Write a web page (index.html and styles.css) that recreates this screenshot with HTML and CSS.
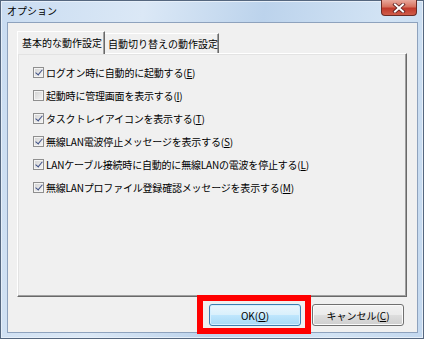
FILE: index.html
```html
<!DOCTYPE html>
<html lang="ja">
<head>
<meta charset="utf-8">
<link rel="stylesheet" href="styles.css">
</head>
<body>
<div class="window">
  <div class="titlebar">
    <span class="title">オプション</span>
    <div class="close">
      <svg width="14" height="10" viewBox="0 0 14 10"><path d="M3 1.5 L11 8.5 M11 1.5 L3 8.5" stroke="#5a1e1e" stroke-width="3.6" stroke-linecap="square"/><path d="M3 1.5 L11 8.5 M11 1.5 L3 8.5" stroke="#ffffff" stroke-width="2" stroke-linecap="square"/></svg>
    </div>
  </div>
  <div class="client">
    <div class="tabs">
      <div class="tab active">基本的な動作設定</div>
      <div class="tab">自動切り替えの動作設定</div>
    </div>
    <div class="panel">
      <label class="row"><span class="cb checked"></span>ログオン時に自動的に起動する(<u>E</u>)</label>
      <label class="row"><span class="cb"></span>起動時に管理画面を表示する(<u>I</u>)</label>
      <label class="row"><span class="cb checked"></span>タスクトレイアイコンを表示する(<u>T</u>)</label>
      <label class="row"><span class="cb checked"></span>無線LAN電波停止メッセージを表示する(<u>S</u>)</label>
      <label class="row"><span class="cb checked"></span>LANケーブル接続時に自動的に無線LANの電波を停止する(<u>L</u>)</label>
      <label class="row"><span class="cb checked"></span>無線LANプロファイル登録確認メッセージを表示する(<u>M</u>)</label>
    </div>
    <div class="buttons">
      <div class="btn default">OK(<u>O</u>)</div>
      <div class="btn">キャンセル(<u>C</u>)</div>
    </div>
  </div>
  <div class="highlight"></div>
</div>
</body>
</html>
```

FILE: styles.css
```css
* { box-sizing: border-box; }
html, body { margin: 0; padding: 0; background: #ffffff; }
body {
  font-family: "Noto Sans CJK JP", "Noto Sans", sans-serif;
  font-size: 10px;
  color: #000;
}
.window {
  position: relative;
  width: 424px;
  height: 339px;
  padding: 0 6px 6px 7px;
  background: linear-gradient(100deg, #c9dcf1 0%, #dbe8f6 30%, #bcd3ec 55%, #d2e3f4 80%, #c3d8ef 100%);
  box-shadow: inset 0 0 0 1px #55677f, inset 0 0 0 2px #e6eff9;
  display: flex;
  flex-direction: column;
}
.titlebar {
  height: 22px;
  display: flex;
  align-items: center;
  justify-content: space-between;
}
.title {
  font-size: 10px;
  line-height: 12px;
  margin-top: -1px;
  color: #000;
}
.close {
  align-self: flex-start;
  width: 36px;
  height: 16px;
  margin-right: 1px;
  border: 1px solid #6b2b25;
  border-top: none;
  border-radius: 0 0 4px 4px;
  background: linear-gradient(#e9a99d 0%, #d7725f 45%, #c0392b 55%, #d05d4a 100%);
  display: flex;
  align-items: center;
  justify-content: center;
}
.close svg { display: block; }
.client {
  flex: 1;
  background: #f0f0f0;
  border: 1px solid #8ea2bd;
  display: flex;
  flex-direction: column;
  padding: 8px 10px 6px 9px;
}
.tabs {
  display: flex;
  align-items: flex-end;
  height: 22px;
  position: relative;
  z-index: 1;
}
.tab {
  height: 20px;
  padding: 0 3px 0 3px;
  border-left: 1px solid #ffffff;
  border-top: 1px solid #ffffff;
  border-right: 1px solid #696969;
  box-shadow: inset -1px 0 0 #a0a0a0;
  background: #f0f0f0;
  line-height: 19px;
  white-space: nowrap;
}
.tab.active {
  width: 88px;
  height: 23px;
  margin-bottom: -1px;
  padding-left: 4px;
  line-height: 22px;
}
.tab + .tab {
  width: 114px;
  border-left: none;
}
.panel {
  height: 244px;
  border-left: 1px solid #ffffff;
  border-top: 1px solid #ffffff;
  border-right: 1px solid #696969;
  border-bottom: 1px solid #696969;
  box-shadow: inset -1px -1px 0 #a0a0a0, inset 1px 1px 0 #e3e3e3;
  padding: 7px 0 0 15px;
  display: flex;
  flex-direction: column;
}
.row {
  height: 23px;
  display: flex;
  align-items: center;
  white-space: nowrap;
  line-height: 12px;
  letter-spacing: -0.2px;
}
.cb {
  width: 11px;
  height: 11px;
  margin-right: 2px;
  flex: none;
  border: 1px solid #8f8f8f;
  background: linear-gradient(135deg, #d2d2d2, #f5f5f5);
  box-shadow: inset 0 0 0 1px #f4f4f4;
  position: relative;
}
.cb.checked::after {
  content: "";
  position: absolute;
  left: 2.5px;
  top: 0px;
  width: 3px;
  height: 6px;
  border-right: 1.5px solid #3d4f86;
  border-bottom: 1.5px solid #3d4f86;
  transform: rotate(40deg);
}
.buttons {
  display: flex;
  justify-content: flex-end;
  gap: 11px;
  margin-top: 7px;
  padding-right: 3px;
}
.btn {
  width: 92px;
  height: 22px;
  border: 1px solid #707070;
  border-radius: 3px;
  background: linear-gradient(#f2f2f2 0%, #ebebeb 48%, #dddddd 52%, #cfcfcf 100%);
  box-shadow: inset 0 0 0 1px #fbfbfb;
  display: flex;
  align-items: center;
  justify-content: center;
  white-space: nowrap;
}
.btn.default {
  border-color: #3c7fb1;
  background: linear-gradient(#eaf6fd 0%, #d9f0fc 48%, #bee6fd 52%, #a7d9f5 100%);
  box-shadow: inset 0 0 0 1px #d4efff;
}
.highlight {
  position: absolute;
  left: 197px;
  top: 295px;
  width: 114px;
  height: 39px;
  border: 6px solid #ff0000;
}
```
